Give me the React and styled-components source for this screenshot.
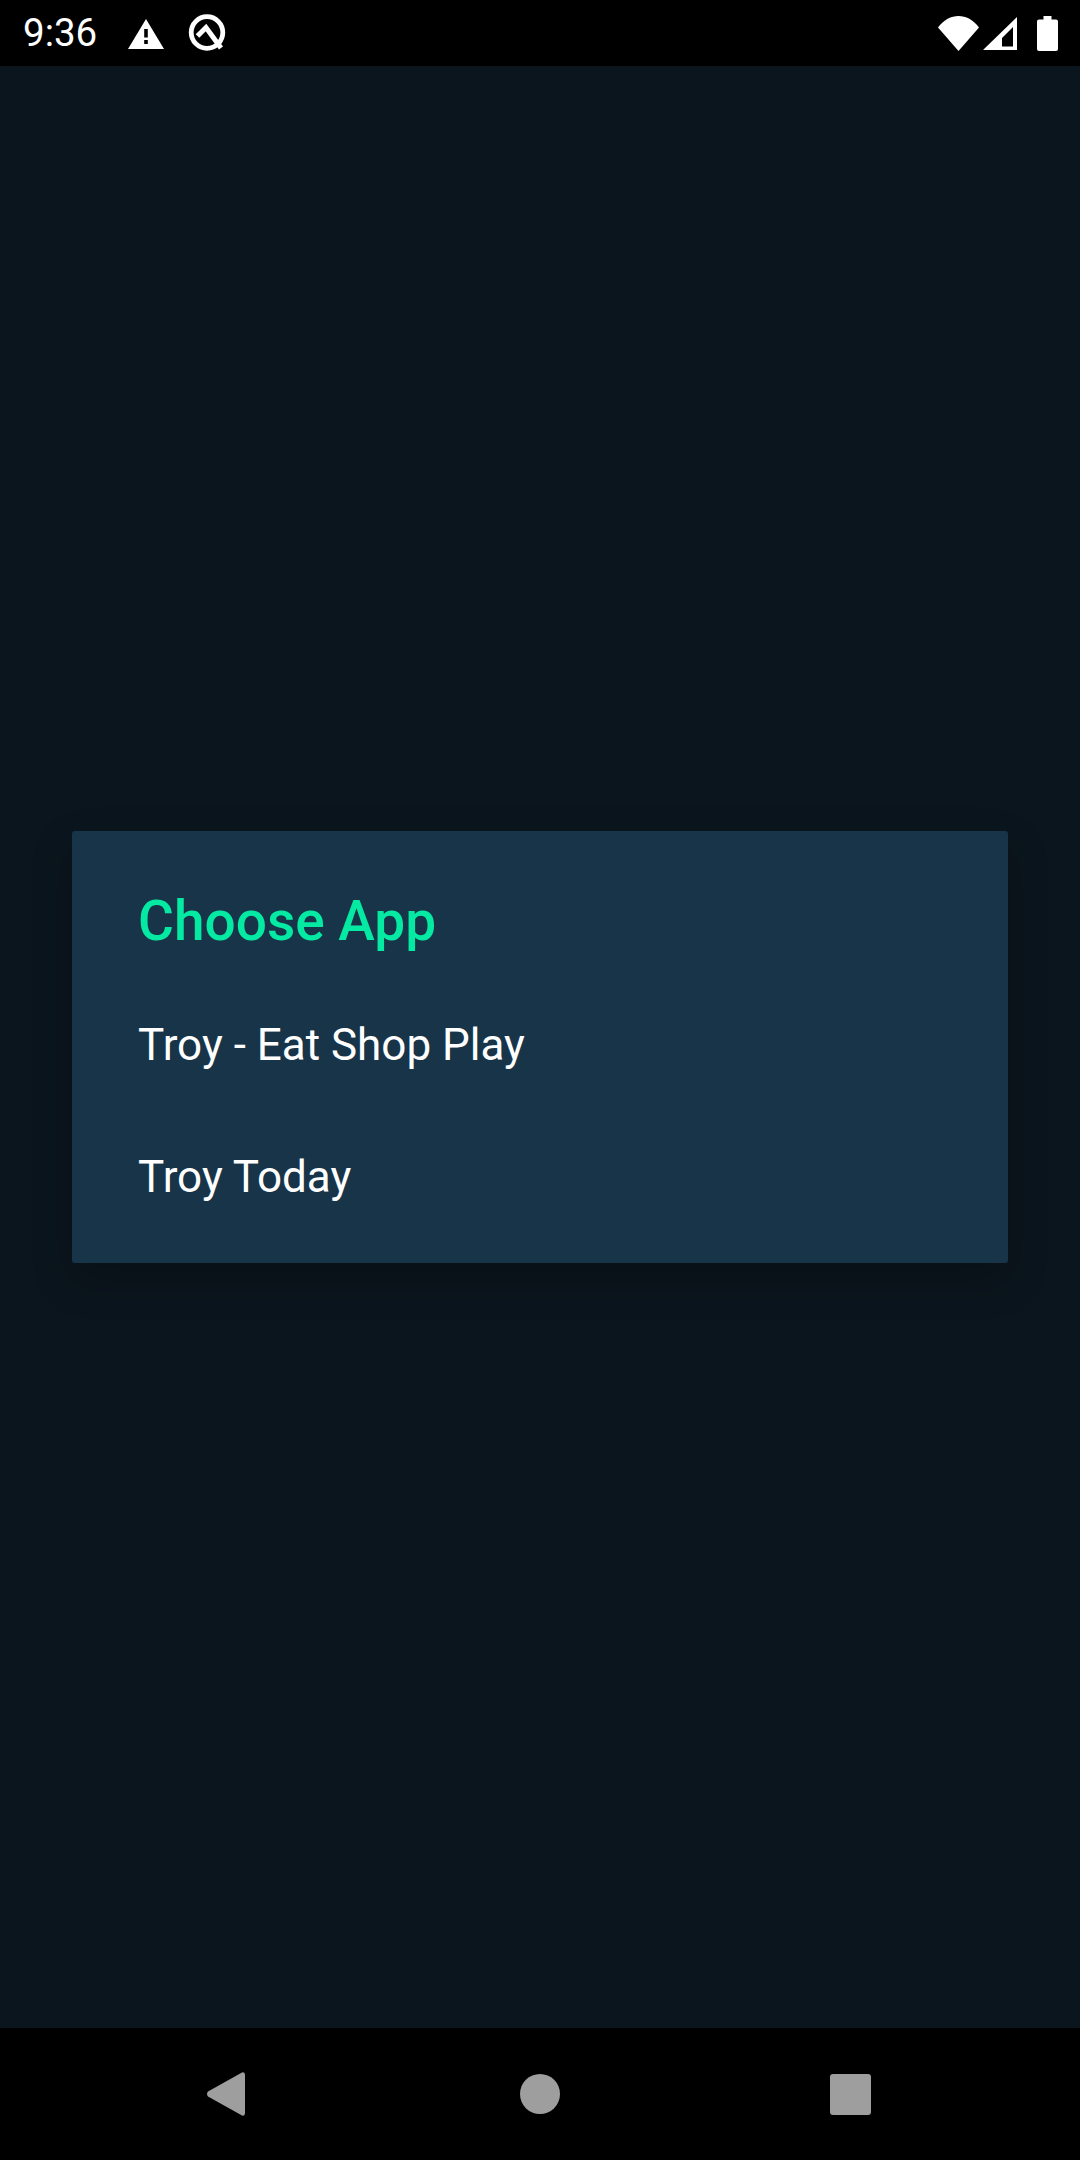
import React from 'react'
import styled, { createGlobalStyle } from 'styled-components'

const GlobalStyle = createGlobalStyle`
    html, body {
        margin: 0;
        padding: 0;
        background: #0b151d;
    }
`;

export default function App() {
    return (
        <>
            <GlobalStyle />
            <Screen>
                <StatusBar>
                    <Clock>9:36</Clock>
                    <AlertIcon viewBox="0 0 36 30">
                        <path fillRule="evenodd" fill="#fff" d="M18 0 L36 30 H0 Z M16.2 10 V18.5 H19.8 V10 Z M16.2 21 V25 H19.8 V21 Z" />
                    </AlertIcon>
                    <QIcon viewBox="0 0 38 38" fill="none">
                        <circle cx="19" cy="18.5" r="15.8" stroke="#fff" strokeWidth="4.8" />
                        <path d="M9.5 22 L18 13.5 L33 34" stroke="#fff" strokeWidth="5" />
                    </QIcon>
                    <StatusRight>
                        <WifiIcon viewBox="0 0 41 35">
                            <path fill="#fff" d="M0 11.5 C11.5 -3.8 29.5 -3.8 41 11.5 L20.5 35 Z" />
                        </WifiIcon>
                        <SignalIcon viewBox="0 0 34 33">
                            <path fillRule="evenodd" fill="#fff" d="M34 0 V33 H0 Z M30 10 L19 21 V29.5 H30 Z" />
                        </SignalIcon>
                        <BatteryIcon viewBox="0 0 21 35">
                            <path fill="#fff" d="M6.5 0 H14.5 V3.5 H19 Q21 3.5 21 5.5 V33 Q21 35 19 35 H2 Q0 35 0 33 V5.5 Q0 3.5 2 3.5 H6.5 Z" />
                        </BatteryIcon>
                    </StatusRight>
                </StatusBar>
                <Main>
                    <Dialog>
                        <DialogTitle>Choose App</DialogTitle>
                        <AppOption>Troy - Eat Shop Play</AppOption>
                        <AppOption>Troy Today</AppOption>
                    </Dialog>
                </Main>
                <NavBar>
                    <BackIcon viewBox="0 0 38 44">
                        <path fill="#9e9e9e" d="M35 0.5 Q38 -0.5 38 3 V41 Q38 44.5 35 43.5 L1 24.5 Q-1 22 1 19.5 Z" />
                    </BackIcon>
                    <HomeIcon viewBox="0 0 40 40">
                        <circle cx="20" cy="20" r="20" fill="#9e9e9e" />
                    </HomeIcon>
                    <RecentsIcon viewBox="0 0 41 41">
                        <rect width="41" height="41" rx="3" fill="#9e9e9e" />
                    </RecentsIcon>
                </NavBar>
            </Screen>
        </>
    )
}

const Screen = styled.div`
    display: flex;
    flex-direction: column;
    width: 1080px;
    height: 2160px;
    overflow: hidden;
    background: #0b151d;
    font-family: Roboto, "Noto Sans", sans-serif;
`;

const StatusBar = styled.div`
    display: flex;
    align-items: center;
    flex: 0 0 66px;
    padding: 0 22px 0 23px;
    background: #000;
`;

const Clock = styled.div`
    width: 72px;
    font-size: 38.5px;
    line-height: 66px;
    color: #fff;
`;

const AlertIcon = styled.svg`
    width: 36px;
    height: 30px;
    margin: 2px 0 0 33px;
`;

const QIcon = styled.svg`
    width: 38px;
    height: 38px;
    margin: 0 0 0 24px;
`;

const StatusRight = styled.div`
    display: flex;
    align-items: center;
    margin-left: auto;
`;

const WifiIcon = styled.svg`
    width: 41px;
    height: 35px;
`;

const SignalIcon = styled.svg`
    width: 34px;
    height: 33px;
    margin-left: 4px;
`;

const BatteryIcon = styled.svg`
    width: 21px;
    height: 35px;
    margin-left: 20px;
`;

const Main = styled.div`
    flex: 1;
    display: flex;
    flex-direction: column;
    padding: 765px 72px 0;
`;

const Dialog = styled.div`
    display: flex;
    flex-direction: column;
    height: 432px;
    box-sizing: border-box;
    padding: 58px 66px 0;
    background: #183449;
    border-radius: 3px;
    box-shadow: 0 16px 40px rgba(0, 0, 0, 0.22);
`;

const DialogTitle = styled.div`
    font-size: 55px;
    font-weight: 500;
    line-height: 64px;
    color: #05eaa3;
    margin-bottom: 26px;
`;

const AppOption = styled.div`
    height: 132px;
    font-size: 44px;
    line-height: 132px;
    color: #fff;
`;

const NavBar = styled.div`
    display: flex;
    align-items: center;
    flex: 0 0 132px;
    padding-left: 207px;
    background: #000;
`;

const BackIcon = styled.svg`
    width: 38px;
    height: 44px;
`;

const HomeIcon = styled.svg`
    width: 40px;
    height: 40px;
    margin-left: 275px;
`;

const RecentsIcon = styled.svg`
    width: 41px;
    height: 41px;
    margin-left: 270px;
`;
